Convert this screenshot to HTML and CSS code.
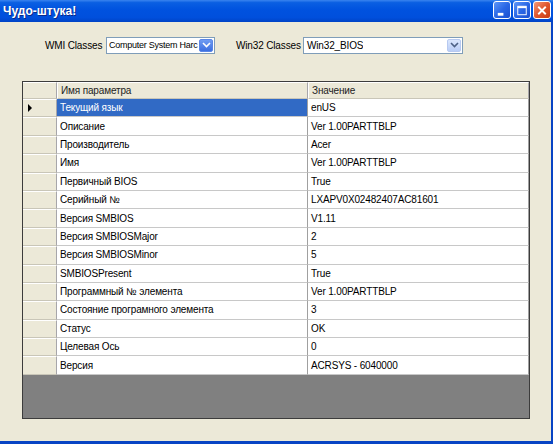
FILE: index.html
```html
<!DOCTYPE html>
<html lang="ru">
<head>
    <meta charset="UTF-8">
    <title>Чудо-штука!</title>
    <link rel="stylesheet" href="styles.css">
</head>
<body>
    <div class="window">
        <div class="title-bar">
            <span class="title">Чудо-штука!</span>
            <div class="title-buttons">
                <span class="tb-btn">
                    <svg width="17" height="17" viewBox="0 0 17 17"><rect x="4" y="11" width="6" height="3" fill="#fff"/></svg>
                </span>
                <span class="tb-btn">
                    <svg width="17" height="17" viewBox="0 0 17 17"><rect x="4" y="4" width="9" height="9" fill="none" stroke="#fff" stroke-width="1"/><rect x="4" y="4" width="9" height="2" fill="#fff"/></svg>
                </span>
                <span class="tb-btn close">
                    <svg width="17" height="17" viewBox="0 0 17 17"><path d="M4.5 4.5 L12.5 12.5 M12.5 4.5 L4.5 12.5" stroke="#fff" stroke-width="2"/></svg>
                </span>
            </div>
        </div>

        <div class="client">
            <div class="toolbar">
                <span class="label">WMI Classes</span>
                <div class="combo combo-wmi">
                    <span class="combo-text">Computer System Harc</span>
                    <span class="combo-btn dark">
                        <svg width="9" height="6" viewBox="0 0 9 6"><path d="M1 1 L4.5 4.5 L8 1" fill="none" stroke="#fff" stroke-width="1.6"/></svg>
                    </span>
                </div>
                <span class="label label-win32">Win32 Classes</span>
                <div class="combo combo-win32">
                    <span class="combo-text">Win32_BIOS</span>
                    <span class="combo-btn">
                        <svg width="9" height="6" viewBox="0 0 9 6"><path d="M1 1 L4.5 4.5 L8 1" fill="none" stroke="#4d6185" stroke-width="1.6"/></svg>
                    </span>
                </div>
            </div>

            <div class="grid">
                <div class="grid-table">
                    <div class="corner"></div>
                    <div class="col-head">Имя параметра</div>
                    <div class="col-head">Значение</div>

                    <div class="row-head current"><span class="arrow"></span></div>
                    <div class="cell selected">Текущий язык</div>
                    <div class="cell">enUS</div>

                    <div class="row-head"></div>
                    <div class="cell">Описание</div>
                    <div class="cell">Ver 1.00PARTTBLP</div>

                    <div class="row-head"></div>
                    <div class="cell">Производитель</div>
                    <div class="cell">Acer</div>

                    <div class="row-head"></div>
                    <div class="cell">Имя</div>
                    <div class="cell">Ver 1.00PARTTBLP</div>

                    <div class="row-head"></div>
                    <div class="cell">Первичный BIOS</div>
                    <div class="cell">True</div>

                    <div class="row-head"></div>
                    <div class="cell">Серийный №</div>
                    <div class="cell">LXAPV0X02482407AC81601</div>

                    <div class="row-head"></div>
                    <div class="cell">Версия SMBIOS</div>
                    <div class="cell">V1.11</div>

                    <div class="row-head"></div>
                    <div class="cell">Версия SMBIOSMajor</div>
                    <div class="cell">2</div>

                    <div class="row-head"></div>
                    <div class="cell">Версия SMBIOSMinor</div>
                    <div class="cell">5</div>

                    <div class="row-head"></div>
                    <div class="cell">SMBIOSPresent</div>
                    <div class="cell">True</div>

                    <div class="row-head"></div>
                    <div class="cell">Программный № элемента</div>
                    <div class="cell">Ver 1.00PARTTBLP</div>

                    <div class="row-head"></div>
                    <div class="cell">Состояние програмного элемента</div>
                    <div class="cell">3</div>

                    <div class="row-head"></div>
                    <div class="cell">Статус</div>
                    <div class="cell">OK</div>

                    <div class="row-head"></div>
                    <div class="cell">Целевая Ось</div>
                    <div class="cell">0</div>

                    <div class="row-head"></div>
                    <div class="cell">Версия</div>
                    <div class="cell">ACRSYS - 6040000</div>
                </div>
            </div>
        </div>
    </div>
</body>
</html>
```

FILE: styles.css
```css
* {
    margin: 0;
    padding: 0;
    box-sizing: border-box;
}

body {
    width: 553px;
    height: 444px;
    overflow: hidden;
    font-family: "Liberation Sans", Arial, sans-serif;
    font-size: 10px;
    letter-spacing: -0.15px;
    color: #000;
    background: #ece9d8;
}

.window {
    display: flex;
    flex-direction: column;
    height: 444px;
}

/* title bar, XP style */
.title-bar {
    height: 22px;
    display: flex;
    align-items: center;
    justify-content: space-between;
    padding: 0 2px 0 3px;
    background: linear-gradient(#3a84ef 0%, #0a5fe2 12%, #0052df 45%, #004fdc 80%, #0043c6 100%);
}

.title {
    color: #fff;
    font-family: "Liberation Sans", Arial, sans-serif;
    font-weight: bold;
    font-size: 12px;
    letter-spacing: 0;
    text-shadow: 1px 1px 0 #0a2a8a;
}

.title-buttons {
    display: flex;
    gap: 2px;
    margin-top: -2px;
}

.tb-btn {
    width: 18px;
    height: 18px;
    border: 1px solid #fff;
    border-radius: 3px;
    background: linear-gradient(135deg, #5e96f7 0%, #2a68e6 50%, #1a4fd0 100%);
    display: flex;
    align-items: center;
    justify-content: center;
}

.tb-btn.close {
    background: linear-gradient(135deg, #f29a7a 0%, #e0562f 50%, #c63b14 100%);
}

/* client area */
.client {
    flex: 1;
    display: flex;
    flex-direction: column;
    border-right: 2px solid #0844c4;
    border-bottom: 3px solid #0844c4;
}

.toolbar {
    display: flex;
    align-items: center;
    height: 16px;
    margin-top: 15px;
    padding-left: 45px;
}

.label {
    width: 55px;
    white-space: nowrap;
}

.label-win32 {
    width: 62px;
    margin-left: 21px;
}

.combo {
    height: 17px;
    display: flex;
    align-items: center;
    justify-content: space-between;
    background: #fff;
    border: 1px solid #7f9db9;
    margin-left: 6px;
    padding: 1px;
}

.combo-wmi {
    width: 109px;
}

.combo-wmi .combo-text {
    font-size: 9px;
    letter-spacing: -0.25px;
    padding-left: 1px;
}

.combo-win32 {
    width: 160px;
    margin-left: 5px;
}

.combo-text {
    padding-left: 2px;
    white-space: nowrap;
    overflow: hidden;
}

.combo-btn {
    flex: none;
    width: 14px;
    height: 13px;
    border-radius: 2px;
    background: linear-gradient(#dbe7fd, #b9cdf6);
    border: 1px solid #b7c9f0;
    display: flex;
    align-items: center;
    justify-content: center;
}

.combo-btn.dark {
    background: linear-gradient(#6f9cf2, #3c6fe0);
    border-color: #5a86e6;
}

/* data grid */
.grid {
    margin: 28px 0 0 22px;
    width: 508px;
    height: 338px;
    background: #808080;
    border: 1px solid #3c3c3c;
    overflow: hidden;
}

.grid-table {
    display: grid;
    grid-template-columns: 34px 251px 1fr;
    grid-template-rows: 17px repeat(15, 18.4px);
}

.corner,
.col-head,
.row-head {
    background: #ece9d8;
    border-right: 1px solid #a7a6aa;
    border-bottom: 1px solid #c9c6b8;
    border-top: 1px solid #fff;
}

.col-head {
    display: flex;
    align-items: center;
    padding-left: 3px;
    color: #222;
    border-left: 1px solid #fff;
}

.row-head {
    display: flex;
    align-items: center;
    padding-left: 5px;
}

.arrow {
    width: 0;
    height: 0;
    border-top: 4px solid transparent;
    border-bottom: 4px solid transparent;
    border-left: 4px solid #000;
}

.cell {
    display: flex;
    align-items: center;
    padding-left: 3px;
    background: #fff;
    border-right: 1px solid #a0a0a0;
    border-bottom: 1px solid #c8c8c8;
    white-space: nowrap;
    overflow: hidden;
}

.cell.selected {
    background: #316ac5;
    color: #fff;
}
```
